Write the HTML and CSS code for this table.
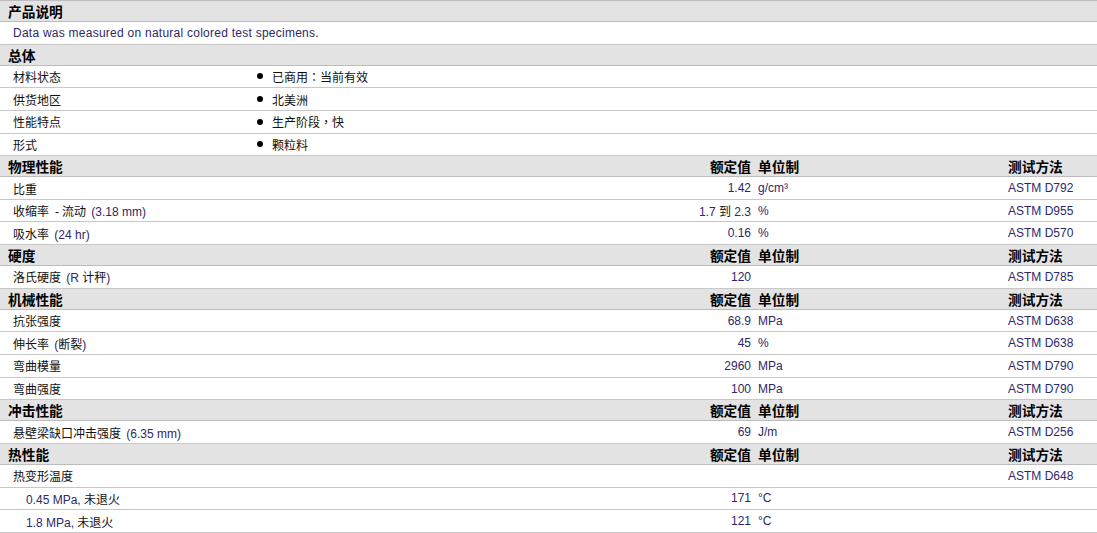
FILE: index.html
```html
<!DOCTYPE html>
<html lang="zh">
<head>
<meta charset="utf-8">
<title>产品说明</title>
<link rel="stylesheet" href="styles.css">
</head>
<body>
<div class="sheet">
  <div class="row hd"><div class="c1">产品说明</div></div>
  <div class="row"><div class="c1 lat desc">Data was measured on natural colored test specimens.</div></div>

  <div class="row hd"><div class="c1">总体</div></div>
  <div class="row brow"><div class="c1">材料状态</div><div class="bul"><span class="dot"></span>已商用<span class="pn">：</span>当前有效</div></div>
  <div class="row brow"><div class="c1">供货地区</div><div class="bul"><span class="dot"></span>北美洲</div></div>
  <div class="row brow"><div class="c1">性能特点</div><div class="bul"><span class="dot"></span>生产阶段<span class="pn">，</span>快</div></div>
  <div class="row brow"><div class="c1">形式</div><div class="bul"><span class="dot"></span>颗粒料</div></div>

  <div class="row hd"><div class="c1">物理性能</div><div class="c2">额定值</div><div class="c3">单位制</div><div class="c4">测试方法</div></div>
  <div class="row"><div class="c1">比重</div><div class="c2 lat">1.42</div><div class="c3 lat">g/cm³</div><div class="c4 lat">ASTM D792</div></div>
  <div class="row"><div class="c1">收缩率<span class="dash">-</span>流动 <span class="lat par">(3.18 mm)</span></div><div class="c2"><span class="lat">1.7</span> 到 <span class="lat">2.3</span></div><div class="c3 lat">%</div><div class="c4 lat">ASTM D955</div></div>
  <div class="row"><div class="c1">吸水率 <span class="lat par">(24 hr)</span></div><div class="c2 lat">0.16</div><div class="c3 lat">%</div><div class="c4 lat">ASTM D570</div></div>

  <div class="row hd"><div class="c1">硬度</div><div class="c2">额定值</div><div class="c3">单位制</div><div class="c4">测试方法</div></div>
  <div class="row"><div class="c1">洛氏硬度 <span class="lat par">(R</span> 计秤<span class="lat">)</span></div><div class="c2 lat">120</div><div class="c3"></div><div class="c4 lat">ASTM D785</div></div>

  <div class="row hd"><div class="c1">机械性能</div><div class="c2">额定值</div><div class="c3">单位制</div><div class="c4">测试方法</div></div>
  <div class="row"><div class="c1">抗张强度</div><div class="c2 lat">68.9</div><div class="c3 lat">MPa</div><div class="c4 lat">ASTM D638</div></div>
  <div class="row"><div class="c1">伸长率 <span class="lat par">(</span>断裂<span class="lat">)</span></div><div class="c2 lat">45</div><div class="c3 lat">%</div><div class="c4 lat">ASTM D638</div></div>
  <div class="row"><div class="c1">弯曲模量</div><div class="c2 lat">2960</div><div class="c3 lat">MPa</div><div class="c4 lat">ASTM D790</div></div>
  <div class="row"><div class="c1">弯曲强度</div><div class="c2 lat">100</div><div class="c3 lat">MPa</div><div class="c4 lat">ASTM D790</div></div>

  <div class="row hd"><div class="c1">冲击性能</div><div class="c2">额定值</div><div class="c3">单位制</div><div class="c4">测试方法</div></div>
  <div class="row"><div class="c1">悬壁梁缺口冲击强度 <span class="lat par">(6.35 mm)</span></div><div class="c2 lat">69</div><div class="c3 lat">J/m</div><div class="c4 lat">ASTM D256</div></div>

  <div class="row hd"><div class="c1">热性能</div><div class="c2">额定值</div><div class="c3">单位制</div><div class="c4">测试方法</div></div>
  <div class="row"><div class="c1">热变形温度</div><div class="c2"></div><div class="c3"></div><div class="c4 lat">ASTM D648</div></div>
  <div class="row"><div class="c1 sub"><span class="lat">0.45 MPa,</span> 未退火</div><div class="c2 lat">171</div><div class="c3 lat">°C</div><div class="c4"></div></div>
  <div class="row"><div class="c1 sub"><span class="lat">1.8 MPa,</span> 未退火</div><div class="c2 lat">121</div><div class="c3 lat">°C</div><div class="c4"></div></div>
</div>
</body>
</html>
```

FILE: styles.css
```css
* { box-sizing: border-box; }

body {
  margin: 0;
  background: #ffffff;
  font-family: "Liberation Sans", "Noto Sans CJK SC", sans-serif;
  font-size: 12px;
  color: #111111;
}

.sheet {
  width: 1097px;
  border-top: 1px solid #bdbdbd;
}

.row {
  display: grid;
  grid-template-columns: 651px 104px 250px 1fr;
  align-items: center;
  height: 22.65px;
  border-bottom: 1px solid #c8c8c8;
  white-space: nowrap;
}

.row.brow {
  grid-template-columns: 256px 1fr;
}

.hd {
  height: 21px;
  background: #e3e3e3;
  border-bottom-color: #bcbcbc;
  font-weight: bold;
  font-size: 13.7px;
  color: #000000;
}

.c1 { padding-left: 13px; }
.hd .c1 { padding-left: 8px; }
.c1.sub { padding-left: 26px; }

.c2 { text-align: right; padding-right: 4px; }
.c3 { padding-left: 3px; }
.c4 { padding-left: 3px; }

.lat { color: #2e2868; }

.desc { letter-spacing: 0.25px; }

.par { margin-left: 2px; }

.dash {
  margin: 0 3px 0 6px;
}

.pn {
  font-family: "Noto Sans CJK TC", sans-serif;
}

.bul {
  display: flex;
  align-items: center;
  padding-left: 1px;
}

.dot {
  width: 6px;
  height: 6px;
  margin-right: 9px;
  border-radius: 50%;
  background: #000000;
}
```
